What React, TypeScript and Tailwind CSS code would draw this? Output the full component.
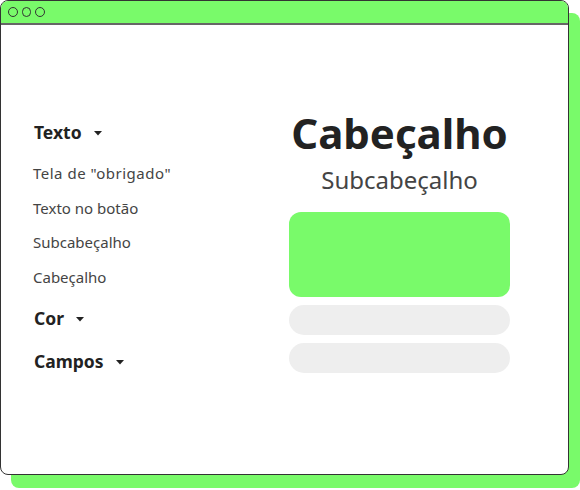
const Caret = () => (
  <svg width="8" height="5" viewBox="0 0 8 5" className="ml-[12px] mt-[2px]">
    <path d="M0 0 L8 0 L4 4.5 Z" fill="#222" />
  </svg>
);

const Section = ({ label }: { label: string }) => (
  <div className="flex items-center h-[26px] pl-[1px] text-[17.5px] font-bold text-[#222]">
    {label}
    <Caret />
  </div>
);

const items = ['Tela de "obrigado"', 'Texto no botão', 'Subcabeçalho', 'Cabeçalho'];

export default function App() {
  return (
    <div className="w-[580px] h-[490px] bg-white" style={{ fontFamily: '"Noto Sans", "Open Sans", sans-serif' }}>
      <div className="w-[569px] h-[475px] border border-[#333] rounded-[8px] overflow-hidden shadow-[11px_13px_0_0_#79fa6a] flex flex-col bg-white">
        {/* title bar */}
        <div className="h-[24px] shrink-0 bg-[#79fa6a] border-b-2 border-[#666] flex items-center gap-[4px] pl-[7px]">
          <span className="w-[9.5px] h-[9.5px] rounded-full border-[1.5px] border-[#333]" />
          <span className="w-[9.5px] h-[9.5px] rounded-full border-[1.5px] border-[#333]" />
          <span className="w-[9.5px] h-[9.5px] rounded-full border-[1.5px] border-[#333]" />
        </div>

        <div className="flex">
          {/* left menu */}
          <div className="w-[288px] pl-[32px] pt-[94px] flex flex-col">
            <Section label="Texto" />
            <div className="flex flex-col mt-[18px] text-[15px] text-[#444] gap-[14.5px]">
              {items.map((t, i) => (
                <div key={t} className={`h-[20px] leading-[20px] ${i === 0 ? 'tracking-[0.5px]' : ''}`}>{t}</div>
              ))}
            </div>
            <div className="mt-[19px]">
              <Section label="Cor" />
            </div>
            <div className="mt-[17px]">
              <Section label="Campos" />
            </div>
          </div>

          {/* preview */}
          <div className="w-[221px] pt-[82px] flex flex-col items-center">
            <div className="text-[42px] font-bold leading-[52px] text-[#222]">Cabeçalho</div>
            <div className="text-[24px] leading-[30px] text-[#444] mt-[6px]">Subcabeçalho</div>
            <div className="w-full h-[85px] bg-[#79fa6a] rounded-[12px] mt-[17px]" />
            <div className="w-full h-[30px] bg-[#eeeeee] rounded-full mt-[8px]" />
            <div className="w-full h-[30px] bg-[#eeeeee] rounded-full mt-[8px]" />
          </div>
        </div>
      </div>
    </div>
  );
}
